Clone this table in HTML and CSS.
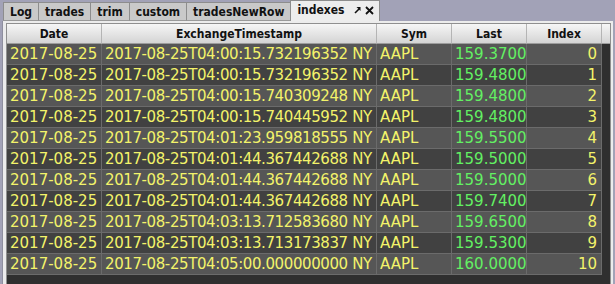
FILE: index.html
```html
<!DOCTYPE html>
<html>
<head>
    <meta charset="UTF-8">
    <title>indexes</title>
    <link rel="stylesheet" href="styles.css">
</head>
<body>
    <!-- tab strip -->
    <div class="tab-bar">
        <div class="tab">Log</div>
        <div class="tab">trades</div>
        <div class="tab">trim</div>
        <div class="tab">custom</div>
        <div class="tab">tradesNewRow</div>
        <div class="tab active">
            indexes
            <svg class="tab-icon pop" width="7" height="8" viewBox="0 0 7 8">
                <path d="M1 7 L5 3" stroke="#111" stroke-width="1.6" fill="none"/>
                <path d="M2.5 1 L6.5 1 L6.5 5 Z" fill="#111"/>
            </svg>
            <svg class="tab-icon close" width="9" height="9" viewBox="0 0 9 9">
                <path d="M1 1 L8 8 M8 1 L1 8" stroke="#111" stroke-width="1.8" fill="none"/>
            </svg>
        </div>
    </div>

    <div class="panel">
        <div class="scroll-pane">
            <div class="grid-row head">
                <div class="cell">Date</div>
                <div class="cell">ExchangeTimestamp</div>
                <div class="cell">Sym</div>
                <div class="cell">Last</div>
                <div class="cell">Index</div>
            </div>
            <div class="rows">
                <div class="grid-row">
                    <div class="cell">2017-08-25</div>
                    <div class="cell stamp">2017-08-25T04:00:15.732196352 NY</div>
                    <div class="cell">AAPL</div>
                    <div class="cell num last">159.3700</div>
                    <div class="cell num">0</div>
                </div>
                <div class="grid-row">
                    <div class="cell">2017-08-25</div>
                    <div class="cell stamp">2017-08-25T04:00:15.732196352 NY</div>
                    <div class="cell">AAPL</div>
                    <div class="cell num last">159.4800</div>
                    <div class="cell num">1</div>
                </div>
                <div class="grid-row">
                    <div class="cell">2017-08-25</div>
                    <div class="cell stamp">2017-08-25T04:00:15.740309248 NY</div>
                    <div class="cell">AAPL</div>
                    <div class="cell num last">159.4800</div>
                    <div class="cell num">2</div>
                </div>
                <div class="grid-row">
                    <div class="cell">2017-08-25</div>
                    <div class="cell stamp">2017-08-25T04:00:15.740445952 NY</div>
                    <div class="cell">AAPL</div>
                    <div class="cell num last">159.4800</div>
                    <div class="cell num">3</div>
                </div>
                <div class="grid-row">
                    <div class="cell">2017-08-25</div>
                    <div class="cell stamp">2017-08-25T04:01:23.959818555 NY</div>
                    <div class="cell">AAPL</div>
                    <div class="cell num last">159.5500</div>
                    <div class="cell num">4</div>
                </div>
                <div class="grid-row">
                    <div class="cell">2017-08-25</div>
                    <div class="cell stamp">2017-08-25T04:01:44.367442688 NY</div>
                    <div class="cell">AAPL</div>
                    <div class="cell num last">159.5000</div>
                    <div class="cell num">5</div>
                </div>
                <div class="grid-row">
                    <div class="cell">2017-08-25</div>
                    <div class="cell stamp">2017-08-25T04:01:44.367442688 NY</div>
                    <div class="cell">AAPL</div>
                    <div class="cell num last">159.5000</div>
                    <div class="cell num">6</div>
                </div>
                <div class="grid-row">
                    <div class="cell">2017-08-25</div>
                    <div class="cell stamp">2017-08-25T04:01:44.367442688 NY</div>
                    <div class="cell">AAPL</div>
                    <div class="cell num last">159.7400</div>
                    <div class="cell num">7</div>
                </div>
                <div class="grid-row">
                    <div class="cell">2017-08-25</div>
                    <div class="cell stamp">2017-08-25T04:03:13.712583680 NY</div>
                    <div class="cell">AAPL</div>
                    <div class="cell num last">159.6500</div>
                    <div class="cell num">8</div>
                </div>
                <div class="grid-row">
                    <div class="cell">2017-08-25</div>
                    <div class="cell stamp">2017-08-25T04:03:13.713173837 NY</div>
                    <div class="cell">AAPL</div>
                    <div class="cell num last">159.5300</div>
                    <div class="cell num">9</div>
                </div>
                <div class="grid-row">
                    <div class="cell">2017-08-25</div>
                    <div class="cell stamp">2017-08-25T04:05:00.000000000 NY</div>
                    <div class="cell">AAPL</div>
                    <div class="cell num last">160.0000</div>
                    <div class="cell num">10</div>
                </div>
            </div>
        </div>
    </div>
</body>
</html>
```

FILE: styles.css
```css
body {
    margin: 0;
    height: 284px;
    overflow: hidden;
    background-color: #a2a2b7;
    font-family: "DejaVu Sans", sans-serif;
}
.tab-bar {
    display: flex;
    align-items: flex-end;
    height: 21px;
    padding-left: 3px;
}
.tab {
    box-sizing: border-box;
    height: 19px;
    padding: 1px 6px 0 6px;
    border: 1px solid #8d8d8d;
    border-right: none;
    border-bottom-color: #9a9a9a;
    background-color: #c9c9c9;
    color: #111;
    font-family: "DejaVu Sans Condensed", "DejaVu Sans", sans-serif;
    font-stretch: condensed;
    font-weight: bold;
    font-size: 12px;
    line-height: 17px;
    white-space: nowrap;
}
.tab.active {
    height: 21px;
    display: flex;
    align-items: flex-start;
    padding: 1px 5px 0 6px;
    border-right: 1px solid #8d8d8d;
    border-bottom: none;
    background-color: #ededed;
}
.tab-icon {
    margin-top: 4px;
}
.tab-icon.pop {
    margin-left: 9px;
}
.tab-icon.close {
    margin-left: 4px;
}
.panel {
    margin: 0 2px 0 2px;
    padding: 2px 2px 0 3px;
    background-color: #ececec;
    border-left: 1px solid #8f8f9f;
}
.scroll-pane {
    height: 280px;
    border: 1px solid #8f8f8f;
    background:
        linear-gradient(#f6f6f6, #d4d4d4 19px, #9c9c9c 19px, #9c9c9c 20px) 0 0 / 100% 20px no-repeat,
        #2f2f2f;
}
.grid-row {
    display: grid;
    grid-template-columns: 95px 275px 75px 75px 75px;
    width: 595px;
}
.cell {
    box-sizing: border-box;
    overflow: hidden;
    white-space: nowrap;
}
.head .cell {
    height: 20px;
    padding-top: 1px;
    border-right: 1px solid #b4b4b4;
    border-bottom: 1px solid #9c9c9c;
    text-align: center;
    color: #111;
    font-family: "DejaVu Sans Condensed", "DejaVu Sans", sans-serif;
    font-stretch: condensed;
    font-weight: bold;
    font-size: 12px;
    line-height: 18px;
}
.rows .grid-row {
    background-color: #414141;
}
.rows .grid-row:nth-child(odd) {
    background-color: #565656;
}
.rows .cell {
    height: 21px;
    padding: 0 3px;
    border-right: 1px solid #6b6b6b;
    border-bottom: 1px solid #6b6b6b;
    color: #f3f36a;
    font-size: 15px;
    line-height: 20px;
}
.rows .cell.stamp {
    letter-spacing: -0.4px;
}
.rows .cell.num {
    text-align: right;
    padding-right: 4px;
}
.rows .cell.last {
    color: #63f063;
}
```
